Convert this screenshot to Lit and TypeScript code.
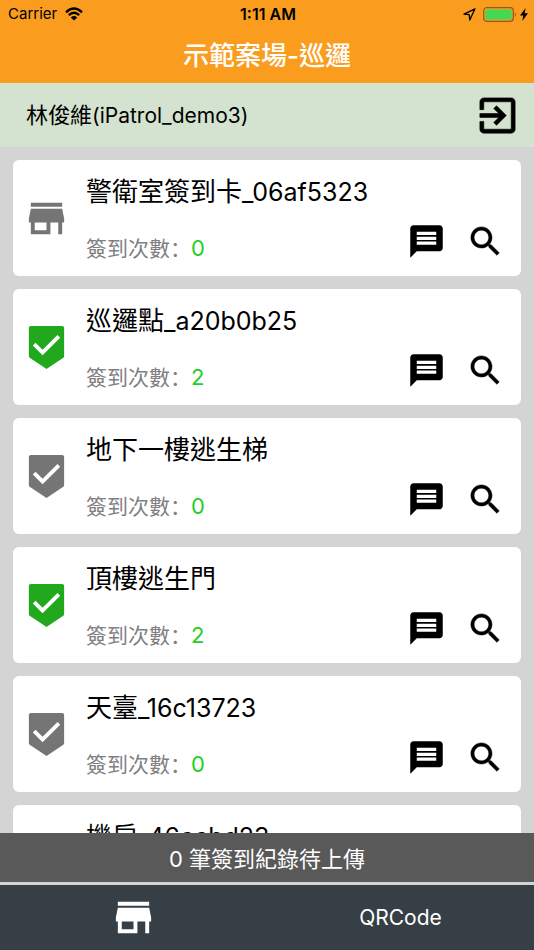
import { LitElement, html, css, svg } from "lit";
import { customElement, property } from "lit/decorators.js";
import { classMap } from "lit/directives/class-map.js";

const icons = {
  store: svg`<path d="M20 4H4v2h16V4zm1 10v-2l-1-5H4l-1 5v2h1v6h10v-6h4v6h2v-6h1zm-9 4H6v-4h6v4z"/>`,
  badge: svg`<path d="M20 1H4c-.55 0-1 .45-1 1v14.4q0 .5.4.8L12 23l8.6-5.8q.4-.3.4-.8V2c0-.55-.45-1-1-1zM10 16l-5-5 1.41-1.41L10 13.17l7.59-7.59L19 7l-9 9z"/>`,
  exit: svg`<path stroke="currentColor" stroke-width=".3" d="M10.09 15.59L11.5 17l5-5-5-5-1.41 1.41L12.67 11H3v2h9.67l-2.58 2.59zM19 3H5c-1.11 0-2 .9-2 2v4h2V5h14v14H5v-4H3v4c0 1.1.89 2 2 2h14c1.1 0 2-.9 2-2V5c0-1.1-.9-2-2-2z"/>`,
  message: svg`<path d="M20 2H4c-1.1 0-1.99.9-1.99 2L2 22l4-4h14c1.1 0 2-.9 2-2V4c0-1.1-.9-2-2-2zm-2 12H6v-2h12v2zm0-3H6V9h12v2zm0-3H6V6h12v2z"/>`,
  search: svg`<path stroke="currentColor" stroke-width=".3" d="M15.5 14h-.79l-.28-.27C15.41 12.59 16 11.11 16 9.5 16 5.91 13.09 3 9.5 3S3 5.91 3 9.5 5.91 16 9.5 16c1.61 0 3.09-.59 4.23-1.57l.27.28v.79l5 4.99L20.49 19l-4.99-5zm-6 0C7.01 14 5 11.99 5 9.5S7.01 5 9.5 5 14 7.01 14 9.5 11.99 14 9.5 14z"/>`,
};

const icon = (name: keyof typeof icons) =>
  html`<svg viewBox="0 0 24 24" fill="currentColor" aria-hidden="true">${icons[name]}</svg>`;

/** Wraps each run of Latin characters so it can be set slightly smaller than the Han text. */
const mixed = (text: string) =>
  text
    .split(/([\x21-\x7e]+)/)
    .filter(Boolean)
    .map((run) => (/^[\x21-\x7e]/.test(run) ? html`<span class="latin">${run}</span>` : run));

interface Point {
  name: string;
  count: number;
  icon: "store" | "badge";
}

const points: Point[] = [
  { name: "警衛室簽到卡_06af5323", count: 0, icon: "store" },
  { name: "巡邏點_a20b0b25", count: 2, icon: "badge" },
  { name: "地下一樓逃生梯", count: 0, icon: "badge" },
  { name: "頂樓逃生門", count: 2, icon: "badge" },
  { name: "天臺_16c13723", count: 0, icon: "badge" },
  { name: "機房_46ccbd23", count: 0, icon: "badge" },
];

const shared = css`
  * {
    box-sizing: border-box;
  }
  svg {
    display: block;
  }
  button {
    font: inherit;
    color: inherit;
    background: none;
    border: 0;
    padding: 0;
    cursor: pointer;
  }
`;

@customElement("status-bar")
export class StatusBar extends LitElement {
  static styles = [
    shared,
    css`
      :host {
        display: grid;
        grid-template-columns: 1fr auto 1fr;
        align-items: center;
        height: 28px;
        padding: 0 6px 0 8px;
        font-size: 15px;
        line-height: 20px;
        color: #000;
      }
      .side {
        display: flex;
        align-items: center;
        gap: 8px;
      }
      .right {
        justify-content: flex-end;
        gap: 3px;
      }
      .time {
        font-size: 16px;
        font-weight: 600;
      }
      .wifi {
        width: 18px;
        height: 14px;
      }
      .arrow {
        width: 13px;
        height: 13px;
        margin-right: 4px;
      }
      .battery {
        width: 34px;
        height: 15px;
      }
      .bolt {
        width: 8px;
        height: 13px;
      }
    `,
  ];

  render() {
    return html`
      <div class="side">
        <span>Carrier</span>
        <svg class="wifi" viewBox="0 0 18 14">
          <g fill="none" stroke="#000" stroke-width="2.3">
            <path d="M1 5.3Q9-2.3 17 5.3" />
            <path d="M3.8 8.2Q9 3.3 14.2 8.2" />
          </g>
          <path d="M9 13.6L5.8 10.4Q9 7.6 12.2 10.4z" />
        </svg>
      </div>
      <span class="time">1:11 AM</span>
      <div class="side right">
        <svg class="arrow" viewBox="0 0 13 13">
          <path d="M12 .8L1 6.2l5.2.4.6 5.400z" fill="none" stroke="#000" stroke-width="1.3" stroke-linejoin="round" />
        </svg>
        <svg class="battery" viewBox="0 0 34 15">
          <rect x=".7" y=".7" width="29.6" height="13.6" rx="3" fill="none" stroke="#8d5c1d" stroke-width="1.2" />
          <rect x="2.4" y="2.4" width="26.2" height="10.2" rx="1.5" fill="#44d855" />
          <path d="M31.8 5Q34 7.5 31.8 10z" fill="#8d5c1d" />
        </svg>
        <svg class="bolt" viewBox="0 0 8 13"><path d="M5.6 0L0 7.5h3.2L2.3 13 8 5.2H4.7z" /></svg>
      </div>
    `;
  }
}

@customElement("patrol-card")
export class PatrolCard extends LitElement {
  @property({ attribute: false }) point!: Point;

  static styles = [
    shared,
    css`
      :host {
        display: block;
      }
      .card {
        display: flex;
        align-items: center;
        height: 116px;
        padding: 0 16px 0 10px;
        border-radius: 6px;
        background: #fff;
      }
      .mark {
        flex: none;
        width: 47px;
        height: 47px;
        margin-right: 16px;
        color: #757575;
      }
      .done {
        color: #22a81c;
      }
      .body {
        flex: 1;
        min-width: 0;
        align-self: stretch;
        display: flex;
        flex-direction: column;
        justify-content: space-between;
        padding: 15px 0 12px;
      }
      .name {
        margin: 0;
        font-size: 26px;
        font-weight: 400;
        line-height: 34px;
        color: #000;
        white-space: nowrap;
      }
      .latin {
        font-size: 25px;
      }
      .row {
        display: flex;
        align-items: center;
        height: 45px;
      }
      .count {
        flex: 1;
        align-self: flex-end;
        margin: 0;
        font-family: Inter, "Noto Sans CJK SC", sans-serif;
        font-size: 21px;
        line-height: 30px;
        color: #808080;
      }
      .number {
        font-size: 22px;
        color: #1fd026;
      }
      .actions {
        display: flex;
        gap: 20px;
        color: #000;
      }
      .actions svg {
        width: 39px;
        height: 39px;
      }
    `,
  ];

  render() {
    const { name, count, icon: kind } = this.point;
    return html`
      <article class="card">
        <div class=${classMap({ mark: true, done: count > 0 })}>${icon(kind)}</div>
        <div class="body">
          <h2 class="name">${mixed(name)}</h2>
          <div class="row">
            <p class="count">簽到次數：<span class="number">${count}</span></p>
            <div class="actions">
              <button aria-label="留言">${icon("message")}</button>
              <button aria-label="查詢">${icon("search")}</button>
            </div>
          </div>
        </div>
      </article>
    `;
  }
}

@customElement("app-root")
export class AppRoot extends LitElement {
  static styles = [
    shared,
    css`
      :host {
        display: flex;
        flex-direction: column;
        height: 100vh;
        overflow: hidden;
        background: #d4d4d4;
        font-family: Inter, "Noto Sans CJK TC", sans-serif;
      }
      .top {
        flex: none;
        background: #fa9d1e;
      }
      .title {
        margin: 0;
        height: 55px;
        font-size: 26px;
        font-weight: 500;
        line-height: 56px;
        text-align: center;
        color: #fff;
      }
      .user {
        flex: none;
        display: flex;
        align-items: center;
        justify-content: space-between;
        height: 64px;
        padding: 0 13px 0 26px;
        background: #d4e3cf;
        font-size: 22px;
        line-height: 30px;
        color: #000;
      }
      .latin {
        font-size: 21px;
      }
      .user svg {
        width: 47px;
        height: 47px;
      }
      .list {
        flex: 1;
        min-height: 0;
        overflow: hidden;
        display: flex;
        flex-direction: column;
        gap: 13px;
        margin: 0;
        padding: 13px;
        list-style: none;
      }
      .pending {
        flex: none;
        margin: 0;
        height: 49px;
        background: #595959;
        font-size: 22px;
        line-height: 52px;
        text-align: center;
        color: #fff;
      }
      .tabs {
        flex: none;
        display: flex;
        height: 68px;
        border-top: 3px solid #d4d4d4;
        background: #363e46;
        color: #fff;
        font-size: 21px;
      }
      .tab {
        flex: 1;
        display: flex;
        align-items: center;
        justify-content: center;
      }
      .tab svg {
        width: 47px;
        height: 47px;
      }
    `,
  ];

  render() {
    return html`
      <header class="top">
        <status-bar></status-bar>
        <h1 class="title">示範案場-巡邏</h1>
      </header>
      <section class="user">
        <span>${mixed("林俊維(iPatrol_demo3)")}</span>
        <button aria-label="登出">${icon("exit")}</button>
      </section>
      <ul class="list">
        ${points.map((p) => html`<li><patrol-card .point=${p}></patrol-card></li>`)}
      </ul>
      <p class="pending">0 筆簽到紀錄待上傳</p>
      <nav class="tabs">
        <button class="tab" aria-label="巡邏點">${icon("store")}</button>
        <button class="tab">QRCode</button>
      </nav>
    `;
  }
}
